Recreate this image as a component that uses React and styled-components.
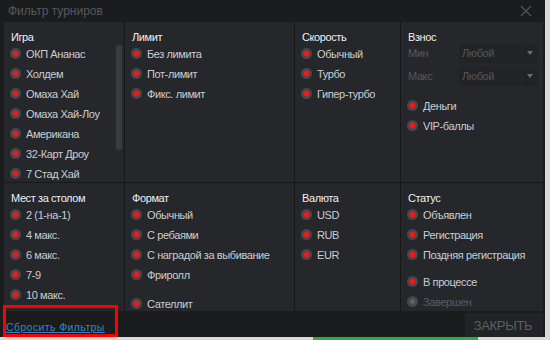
import React from "react";
import styled, { createGlobalStyle } from "styled-components";

const GlobalStyle = createGlobalStyle`
  html, body { margin: 0; padding: 0; }
  body {
    background: #d9d9d9;
    font-family: "Liberation Sans", Arial, sans-serif;
    width: 550px;
    height: 340px;
    overflow: hidden;
  }
`;

const Page = styled.div`
  width: 550px;
  height: 340px;
  display: flex;
  flex-direction: column;
`;

const Window = styled.div`
  position: relative;
  width: 545px;
  height: 337px;
  background: #1b1c1e;
  display: flex;
  flex-direction: column;
`;

const TitleBar = styled.div`
  height: 22px;
  display: flex;
  align-items: center;
  justify-content: space-between;
  padding: 0 13px 0 8px;
  color: #55585c;
  font-size: 12px;
`;

const CloseBtn = styled.svg`
  width: 12px;
  height: 12px;
  margin-top: 1px;
`;

const Body = styled.div`
  margin: 0 2px 0 4px;
  height: 290px;
  background: #25272b;
  display: grid;
  grid-template-columns: 121px 170px 106px 1fr;
  grid-template-rows: 161px 1fr;
  overflow: hidden;
`;

const Cell = styled.div`
  position: relative;
  padding: ${(p) => (p.$top ? 9 : 9)}px 0 0 7px;
  border-right: ${(p) => (p.$last ? "none" : "1px solid #17181a")};
  border-bottom: ${(p) => (p.$top ? "1px solid #17181a" : "none")};
  overflow: hidden;
`;

const Header = styled.div`
  height: 13px;
  line-height: 13px;
  color: #f0f0f0;
  font-size: 11px;
  letter-spacing: -0.4px;
`;

const Item = styled.div`
  height: 20px;
  display: flex;
  align-items: center;
  gap: 5px;
  margin-top: ${(p) => p.$gap || 0}px;
  color: ${(p) => (p.$disabled ? "#5a5d61" : "#cbcdd0")};
  font-size: 11px;
  letter-spacing: -0.4px;
  white-space: nowrap;
`;

const Radio = styled.span`
  width: 11px;
  height: 11px;
  border-radius: 50%;
  background: #45484c;
  display: flex;
  align-items: center;
  justify-content: center;
  flex-shrink: 0;
  margin-left: -1px;

  &::after {
    content: "";
    width: 5px;
    height: 5px;
    border-radius: 50%;
    background: ${(p) => (p.$disabled ? "#5f6266" : "#ff1414")};
    box-shadow: ${(p) => (p.$disabled ? "none" : "0 0 2px #ff2020")};
  }
`;

const ScrollThumb = styled.div`
  position: absolute;
  left: 112px;
  top: 23px;
  width: 6px;
  height: 105px;
  border-radius: 2px;
  background: #393b3f;
`;

const SelectRow = styled.div`
  display: flex;
  align-items: center;
  height: 19px;
  margin-top: ${(p) => p.$gap || 0}px;
`;

const SelectLabel = styled.span`
  width: 51px;
  color: #55585c;
  font-size: 11px;
  letter-spacing: -0.4px;
`;

const SelectBox = styled.div`
  width: 59px;
  height: 19px;
  padding-left: 3px;
  background: #212326;
  color: #55585c;
  font-size: 11px;
  letter-spacing: -0.4px;
  display: flex;
  align-items: center;
`;

const SelectArrow = styled.div`
  width: 16px;
  height: 19px;
  margin-left: 1px;
  background: #212326;
  display: flex;
  align-items: center;
  justify-content: center;

  &::after {
    content: "";
    border-left: 3.5px solid transparent;
    border-right: 3.5px solid transparent;
    border-top: 4px solid #6a6d71;
  }
`;

const Footer = styled.div`
  flex: 1;
  display: flex;
  align-items: center;
  justify-content: space-between;
  padding: 0 2px 0 6px;
`;

const ResetLink = styled.a`
  color: #2f89c4;
  font-size: 10.5px;
  letter-spacing: 0.4px;
  text-decoration: underline;
  margin-top: 5px;
`;

const Highlight = styled.div`
  position: absolute;
  left: 3px;
  top: 305px;
  width: 109px;
  height: 26px;
  border: 3px solid #ff0000;
  pointer-events: none;
`;

const CloseButton = styled.button`
  width: 78px;
  height: 24px;
  margin-top: 2px;
  border: none;
  background: #212326;
  color: #5d6064;
  font-family: "Liberation Sans", Arial, sans-serif;
  font-size: 13px;
  letter-spacing: -0.3px;
  padding-left: 4px;
`;

const GreenStrip = styled.div`
  margin-left: 313px;
  width: 165px;
  height: 3px;
  background: #1fb53c;
`;

const RadioItem = ({ label, gap, disabled }) => (
  <Item $gap={gap} $disabled={disabled}>
    <Radio $disabled={disabled} />
    {label}
  </Item>
);

const game = ["ОКП Ананас", "Холдем", "Омаха Хай", "Омаха Хай-Лоу", "Американа", "32-Карт Дроу", "7 Стад Хай"];
const limit = ["Без лимита", "Пот-лимит", "Фикс. лимит"];
const speed = ["Обычный", "Турбо", "Гипер-турбо"];
const seats = ["2 (1-на-1)", "4 макс.", "6 макс.", "7-9", "10 макс."];
const currency = ["USD", "RUB", "EUR"];

export default function App() {
  return (
    <>
      <GlobalStyle />
      <Page>
        <Window>
          <TitleBar>
            <span>Фильтр турниров</span>
            <CloseBtn viewBox="0 0 12 12">
              <path d="M1 1L11 11M11 1L1 11" stroke="#55585c" strokeWidth="1.1" />
            </CloseBtn>
          </TitleBar>
          <Body>
            <Cell $top>
              <Header>Игра</Header>
              {game.map((g) => (
                <RadioItem key={g} label={g} />
              ))}
              <ScrollThumb />
            </Cell>
            <Cell $top>
              <Header>Лимит</Header>
              {limit.map((g) => (
                <RadioItem key={g} label={g} />
              ))}
            </Cell>
            <Cell $top>
              <Header>Скорость</Header>
              {speed.map((g) => (
                <RadioItem key={g} label={g} />
              ))}
            </Cell>
            <Cell $top $last>
              <Header>Взнос</Header>
              <SelectRow $gap={0}>
                <SelectLabel>Мин</SelectLabel>
                <SelectBox>Любой</SelectBox>
                <SelectArrow />
              </SelectRow>
              <SelectRow $gap={4}>
                <SelectLabel>Макс</SelectLabel>
                <SelectBox>Любой</SelectBox>
                <SelectArrow />
              </SelectRow>
              <RadioItem label="Деньги" gap={10} />
              <RadioItem label="VIP-баллы" />
            </Cell>
            <Cell>
              <Header>Мест за столом</Header>
              {seats.map((g) => (
                <RadioItem key={g} label={g} />
              ))}
            </Cell>
            <Cell>
              <Header>Формат</Header>
              <RadioItem label="Обычный" />
              <RadioItem label="С ребаями" />
              <RadioItem label="С наградой за выбивание" />
              <RadioItem label="Фриролл" />
              <RadioItem label="Сателлит" gap={9} />
            </Cell>
            <Cell>
              <Header>Валюта</Header>
              {currency.map((g) => (
                <RadioItem key={g} label={g} />
              ))}
            </Cell>
            <Cell $last>
              <Header>Статус</Header>
              <RadioItem label="Объявлен" />
              <RadioItem label="Регистрация" />
              <RadioItem label="Поздняя регистрация" />
              <RadioItem label="В процессе" gap={7} />
              <RadioItem label="Завершен" disabled />
            </Cell>
          </Body>
          <Footer>
            <ResetLink>Сбросить Фильтры</ResetLink>
            <CloseButton>ЗАКРЫТЬ</CloseButton>
          </Footer>
          <Highlight />
        </Window>
        <GreenStrip />
      </Page>
    </>
  );
}
